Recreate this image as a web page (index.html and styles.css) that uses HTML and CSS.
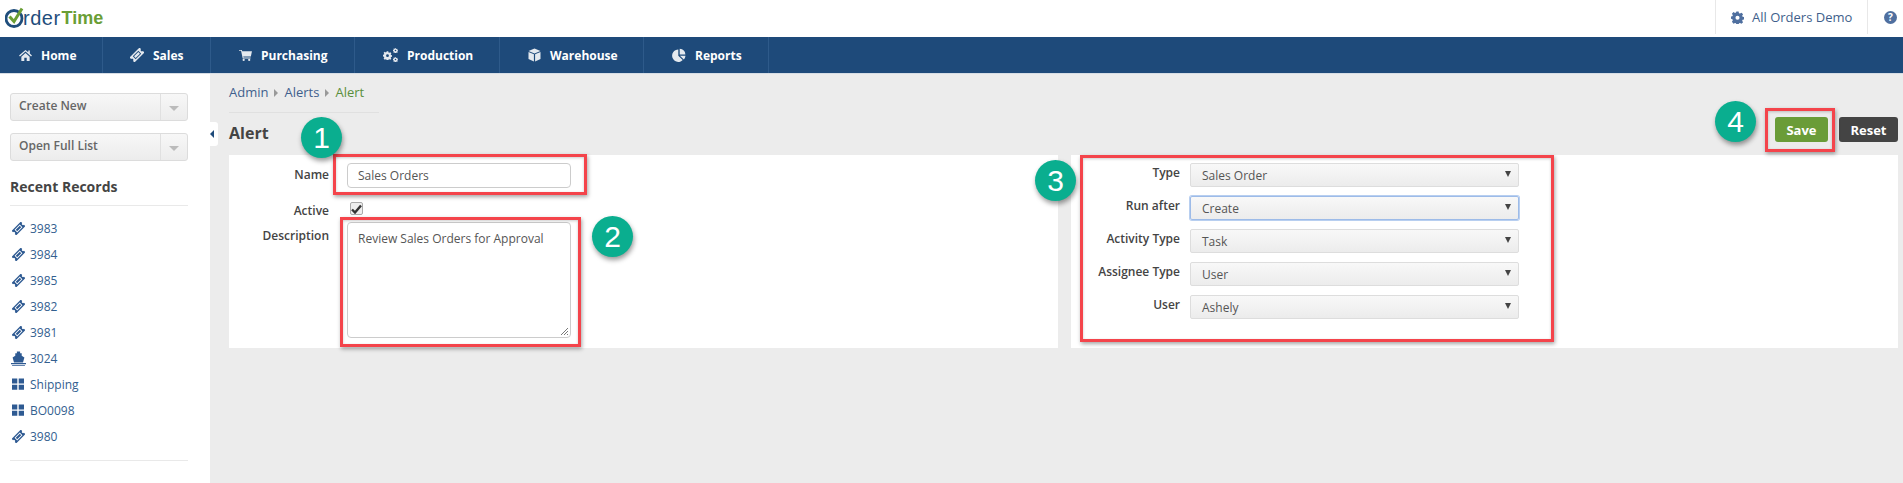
FILE: index.html
```html
<!DOCTYPE html>
<html lang="en">
<head>
<meta charset="utf-8">
<title>Alert</title>
<link rel="stylesheet" href="styles.css">
</head>
<body>
<svg class="defs" width="0" height="0" aria-hidden="true">
  <symbol id="i-ticket" viewBox="-1 -1 16 16"><g transform="rotate(-45 7 7)"><path fill="currentColor" fill-rule="evenodd" d="M-1 3h16v2.500a1.500 1.500 0 000 3V11H-1V8.500a1.500 1.500 0 000-3zM2.500 4.700v4.600h9V4.700zM3.500 5.700h7v2.600h-7z"/></g></symbol>
  <symbol id="i-grid" viewBox="0 0 12 12"><path fill="currentColor" d="M0 .5h5.300v5H0zM6.700 .5H12v5H6.700zM0 6.800h5.300v5H0zM6.700 6.800H12v5H6.700z"/></symbol>
  <symbol id="i-ship" viewBox="0 0 14 14"><path fill="currentColor" d="M5.500 .5h3V2h1.500v2.500L12.500 6l-1.300 4.800H2.800L1.500 6 4 4.500V2h1.500zM0 11.300h14V12.300H0zM1 13h12v.8H1z"/></symbol>
  <symbol id="i-gear" viewBox="0 0 14 14"><path fill="currentColor" fill-rule="evenodd" d="M5.800.5h2.400l.4 1.800 1.100.5 1.600-1 1.700 1.700-1 1.600.5 1.100 1.800.4v2.400l-1.800.4-.5 1.100 1 1.600-1.700 1.700-1.600-1-1.100.5-.4 1.800H5.800l-.4-1.800-1.100-.5-1.600 1L1 11.500l1-1.600-.5-1.100-1.800-.4V6l1.800-.4.500-1.100-1-1.600L2.700 1.200l1.600 1 1.100-.5zM7 5a2.200 2.200 0 100 4.400A2.200 2.200 0 007 5z"/></symbol>
</svg>

<header class="topbar">
  <div class="logo">
    <svg class="logo-o" viewBox="0 0 20 22" width="20" height="22" aria-hidden="true">
      <circle cx="9" cy="12.500" r="8" fill="none" stroke="#1f4e7c" stroke-width="2.800"/>
      <path d="M4.500 10.500l4.500 5L17 2.500" fill="none" stroke="#6a9e35" stroke-width="3"/>
    </svg><span class="logo-a">rder</span><span class="logo-b">Time</span>
  </div>
  <div class="top-right">
    <div class="company">
      <svg class="gear" width="13" height="13"><use href="#i-gear"/></svg>
      <span>All Orders Demo</span>
    </div>
    <div class="help"><span class="help-q">?</span></div>
  </div>
</header>

<nav class="mainnav">
  <a class="nav-item w-home"><svg width="13" height="12" viewBox="0 0 14 13"><path fill="currentColor" d="M7 1L0 7l1 1 6-5.200L13 8l1-1-2.300-2V1.500H10v2zM2.500 8.300L7 4.400l4.500 3.900V13H8.300V9.500H5.700V13H2.500z"/></svg>Home</a>
  <a class="nav-item w-sales"><svg width="14" height="14"><use href="#i-ticket"/></svg>Sales</a>
  <a class="nav-item w-purch"><svg width="13" height="12" viewBox="0 0 14 13"><path fill="currentColor" d="M0 1h3l.5 1.500H14L12.800 8H4.600l.3 1.200h7.600v1H4L2.200 2H0z"/><circle cx="5" cy="11.800" r="1.200" fill="currentColor"/><circle cx="11" cy="11.800" r="1.200" fill="currentColor"/></svg>Purchasing</a>
  <a class="nav-item w-prod"><svg width="15" height="14" viewBox="0 0 15 14"><use href="#i-gear" width="9" height="9" x="0" y="3"/><use href="#i-gear" width="5" height="5" x="10" y="0"/><use href="#i-gear" width="5" height="5" x="10" y="9"/></svg>Production</a>
  <a class="nav-item w-ware"><svg width="13" height="14" viewBox="0 0 13 14"><path fill="currentColor" d="M6.500.5L12.500 3 6.500 5.500.5 3zM.5 4l5.400 2.200V13.500L.5 11zM12.500 4v7l-5.400 2.500V6.200z"/></svg>Warehouse</a>
  <a class="nav-item w-rep"><svg width="14" height="14" viewBox="0 0 14 14"><path fill="currentColor" d="M6.300 1.500V7.700l4.400 4.400A6.200 6.200 0 116.300 1.500zM7.700.7a6.200 6.200 0 015.700 5.700H7.700zM7.900 7.800h5.600a6.200 6.200 0 01-1.700 3.800z"/></svg>Reports</a>
</nav>

<div class="page">
  <aside class="sidebar">
    <div class="split-btn"><span class="split-label">Create New</span><span class="split-caret"></span></div>
    <div class="split-btn"><span class="split-label">Open Full List</span><span class="split-caret"></span></div>
    <h3 class="recent-title">Recent Records</h3>
    <ul class="recent">
      <li><svg width="13" height="13"><use href="#i-ticket"/></svg>3983</li>
      <li><svg width="13" height="13"><use href="#i-ticket"/></svg>3984</li>
      <li><svg width="13" height="13"><use href="#i-ticket"/></svg>3985</li>
      <li><svg width="13" height="13"><use href="#i-ticket"/></svg>3982</li>
      <li><svg width="13" height="13"><use href="#i-ticket"/></svg>3981</li>
      <li><svg class="ship-ic" width="15" height="15"><use href="#i-ship"/></svg>3024</li>
      <li><svg class="grid-ic" width="12" height="12"><use href="#i-grid"/></svg>Shipping</li>
      <li><svg class="grid-ic" width="12" height="12"><use href="#i-grid"/></svg>BO0098</li>
      <li><svg width="13" height="13"><use href="#i-ticket"/></svg>3980</li>
    </ul>
    <span class="collapse-tab"><span class="collapse-arrow"></span></span>
  </aside>

  <main class="content">
    <div class="breadcrumb">
      <span>Admin</span><span class="crumb-sep"></span><span>Alerts</span><span class="crumb-sep"></span><span class="crumb-here">Alert</span>
    </div>
    <div class="title-row">
      <h1 class="page-title">Alert</h1>
      <div class="actions">
        <button class="btn btn-save">Save</button>
        <button class="btn btn-reset">Reset</button>
      </div>
    </div>
    <div class="panels">
      <section class="panel panel-left">
        <div class="row row-name"><label class="lbl">Name</label><div class="field input">Sales Orders</div></div>
        <div class="row row-active"><label class="lbl">Active</label><span class="check"><svg width="11" height="10" viewBox="0 0 11 10"><path d="M1 5.500l3 3L10 1.500" fill="none" stroke="#333" stroke-width="2.400"/></svg></span></div>
        <div class="row row-desc"><label class="lbl">Description</label><div class="field textarea">Review Sales Orders for Approval<svg class="grip" width="9" height="9" viewBox="0 0 9 9"><path d="M1 8l7-7M4 8l4-4M7 8l1-1" stroke="#555" stroke-width=".8"/></svg></div></div>
      </section>
      <section class="panel panel-right">
        <div class="sel-row"><label class="lbl lbl-r">Type</label><div class="select">Sales Order<span class="sel-arrow"></span></div></div>
        <div class="sel-row"><label class="lbl lbl-r">Run after</label><div class="select select-focus">Create<span class="sel-arrow"></span></div></div>
        <div class="sel-row"><label class="lbl lbl-r">Activity Type</label><div class="select">Task<span class="sel-arrow"></span></div></div>
        <div class="sel-row"><label class="lbl lbl-r">Assignee Type</label><div class="select">User<span class="sel-arrow"></span></div></div>
        <div class="sel-row"><label class="lbl lbl-r">User</label><div class="select">Ashely<span class="sel-arrow"></span></div></div>
      </section>
    </div>
  </main>
</div>

<div class="mark mark-1"></div>
<div class="mark mark-2"></div>
<div class="mark mark-3"></div>
<div class="mark mark-4"></div>
<div class="badge badge-1">1</div>
<div class="badge badge-2">2</div>
<div class="badge badge-3">3</div>
<div class="badge badge-4">4</div>
</body>
</html>
```
FILE: styles.css
```css
* { box-sizing: border-box; }
html, body { margin: 0; padding: 0; }
body {
  width: 1903px;
  height: 483px;
  overflow: hidden;
  position: relative;
  background: #ececec;
  font-family: "Open Sans", "Noto Sans", sans-serif;
  font-size: 12px;
  color: #555;
}
.defs { position: absolute; }

.topbar {
  height: 37px;
  background: #fff;
  display: flex;
  justify-content: space-between;
}
.logo {
  display: flex;
  align-items: center;
  padding: 0 0 0 5px;
  font-family: "Liberation Sans", sans-serif;
  height: 36px;
}
.logo-o { margin-right: -2px; margin-top: -2px; }
.logo-a { color: #1f4e7c; font-size: 20px; letter-spacing: .5px; margin-right: 1px; }
.logo-b { color: #6a9e35; font-weight: 700; font-size: 18px; }
.top-right { display: flex; height: 34px; }
.company {
  width: 153px;
  border-left: 1px solid #e8e8e8;
  border-right: 1px solid #e8e8e8;
  display: flex;
  align-items: center;
  gap: 8px;
  padding-left: 15px;
  color: #3f5f8c;
  font-size: 13px;
}
.gear { color: #4f6f9f; }
.help { width: 35px; display: flex; align-items: center; padding-left: 16px; }
.help-q {
  width: 13px; height: 13px;
  flex: none;
  border-radius: 50%;
  background: #4f6f9f;
  color: #fff;
  font-size: 10px;
  font-weight: 700;
  line-height: 13px;
  text-align: center;
}

.mainnav {
  height: 37px;
  background: #1e4a7a;
  border-bottom: 1px solid #d6dde5;
  display: flex;
}
.nav-item {
  display: flex;
  align-items: center;
  height: 36px;
  color: #fff;
  font-weight: 700;
  font-size: 12px;
  border-right: 1px solid #2e5a8a;
  gap: 9px;
}
.nav-item svg { color: #e4e9ef; flex: none; }
.w-home { width: 103px; padding-left: 19px; }
.w-sales { width: 108px; padding-left: 27px; }
.w-purch { width: 144px; padding-left: 28px; }
.w-prod { width: 145px; padding-left: 28px; }
.w-ware { width: 144px; padding-left: 28px; }
.w-rep { width: 125px; padding-left: 28px; }

.page { display: flex; height: 409px; }
.sidebar {
  width: 210px;
  background: #fff;
  padding: 19px 22px 0 10px;
  position: relative;
}
.split-btn {
  width: 178px;
  height: 28px;
  margin-bottom: 12px;
  display: flex;
  border: 1px solid #dcdcdc;
  border-radius: 3px;
  background: linear-gradient(#f7f7f7, #ececec);
}
.split-label {
  flex: 1;
  padding-left: 8px;
  line-height: 23px;
  font-size: 12px;
  font-weight: 600;
  color: #666;
  border-right: 1px solid #e0e0e0;
}
.split-caret {
  width: 26px;
  position: relative;
}
.split-caret::after {
  content: "";
  position: absolute;
  left: 8px;
  top: 12px;
  border: 5px solid transparent;
  border-top: 5px solid #bbb;
  border-bottom: 0;
}
.recent-title {
  margin: 16px 0 0;
  padding-bottom: 9px;
  font-size: 14px;
  line-height: 19px;
  font-weight: 700;
  color: #444;
  border-bottom: 1px solid #e9e9e9;
}
.recent {
  list-style: none;
  margin: 0;
  padding: 9px 0 11px;
  border-bottom: 1px solid #e9e9e9;
}
.recent li {
  height: 26px;
  display: flex;
  align-items: center;
  gap: 5px;
  padding-left: 2px;
  color: #33608f;
  font-size: 12px;
}
.recent svg { color: #2e5a92; flex: none; }
.recent .grid-ic { margin-right: 1px; }
.recent .ship-ic { margin-left: -1px; margin-right: -1px; }
.collapse-tab {
  position: absolute;
  right: -8px;
  top: 48px;
  width: 8px;
  height: 24px;
  background: #fff;
  border-radius: 0 3px 3px 0;
}
.collapse-arrow {
  position: absolute;
  left: 0;
  top: 8px;
  border: 4px solid transparent;
  border-right: 4px solid #1e4a7a;
  border-left: 0;
}

.content { flex: 1; padding: 0 5px 0 19px; }
.breadcrumb {
  width: 150px;
  height: 39px;
  padding-top: 10px;
  line-height: 17px;
  font-size: 13px;
  border-bottom: 1px solid #e0e0e0;
  display: flex;
  align-items: flex-start;
  color: #3f5f8c;
  white-space: nowrap;
}
.crumb-sep {
  margin: 5px 6px 0;
  border: 4px solid transparent;
  border-left: 4px solid #999;
  border-right: 0;
}
.crumb-here { color: #5a8f3c; }
.title-row {
  height: 42px;
  display: flex;
  justify-content: space-between;
  align-items: flex-start;
}
.page-title {
  margin: 9px 0 0;
  font-size: 16px;
  line-height: 22px;
  font-weight: 700;
  color: #444;
}
.actions { display: flex; gap: 11px; padding-top: 4px; }
.btn {
  height: 25px;
  border: 0;
  border-radius: 3px;
  color: #fff;
  font: 700 13px "Open Sans", sans-serif;
  padding: 0;
}
.btn-save { width: 53px; background: #6a9c38; }
.btn-reset { width: 59px; background: #444; }

.panels { display: flex; gap: 13px; }
.panel { background: #fff; height: 193px; width: 829px; }
.panel-right { width: 827px; padding-top: 8px; }
.row { display: flex; align-items: flex-start; }
.row-name { padding-top: 8px; height: 47px; }
.row-active { height: 20px; }
.lbl {
  width: 100px;
  text-align: right;
  color: #444;
  font-size: 12px;
  font-weight: 600;
  line-height: 17px;
  flex: none;
  margin-right: 18px;
}
.row-name .lbl { padding-top: 3px; }
.row-desc .lbl { padding-top: 5px; }
.field {
  width: 224px;
  border: 1px solid #ccc;
  border-radius: 4px;
  background: #fff;
  padding-left: 10px;
  color: #555;
  font-size: 12px;
}
.input { height: 25px; line-height: 24px; }
.textarea { height: 116px; line-height: 17px; padding-top: 7px; position: relative; }
.grip { position: absolute; right: 1px; bottom: 1px; }
.check {
  margin: 0 0 0 3px;
  width: 13px;
  height: 13px;
  border: 1px solid #aaa;
  border-radius: 2px;
  background: #eee;
  display: flex;
  align-items: center;
  justify-content: center;
}
.sel-row { display: flex; height: 33px; align-items: flex-start; }
.lbl-r { width: 109px; margin-right: 10px; padding-top: 1px; }
.select {
  width: 329px;
  height: 24px;
  border: 1px solid #ddd;
  border-radius: 2px;
  background: linear-gradient(#f8f8f8, #ececec);
  padding-left: 11px;
  line-height: 23px;
  font-size: 12px;
  color: #555;
  position: relative;
}
.select-focus { border: 1px solid #9dbbe8; box-shadow: 0 0 0 1px #b8cff0; }
.sel-arrow {
  position: absolute;
  right: 7px;
  top: 7px;
  border: 3px solid transparent;
  border-top: 6px solid #444;
  border-bottom: 0;
}

.mark {
  position: absolute;
  border: 3px solid #f4444b;
  box-shadow: 1px 2px 4px rgba(0,0,0,.35), inset 0 1px 3px rgba(0,0,0,.2);
}
.mark-1 { left: 333px; top: 154px; width: 254px; height: 41px; }
.mark-2 { left: 340px; top: 217px; width: 241px; height: 130px; }
.mark-3 { left: 1080px; top: 155px; width: 474px; height: 187px; }
.mark-4 { left: 1765px; top: 108px; width: 70px; height: 44px; }
.badge {
  position: absolute;
  width: 41px;
  height: 41px;
  border-radius: 50%;
  background: #0aae8f;
  color: #fff;
  font-family: "Liberation Sans", sans-serif;
  font-size: 30px;
  line-height: 41px;
  text-align: center;
  box-shadow: 1px 3px 5px rgba(0,0,0,.4);
}
.badge-1 { left: 301px; top: 117px; }
.badge-2 { left: 592px; top: 216px; }
.badge-3 { left: 1035px; top: 160px; }
.badge-4 { left: 1715px; top: 101px; }
```
